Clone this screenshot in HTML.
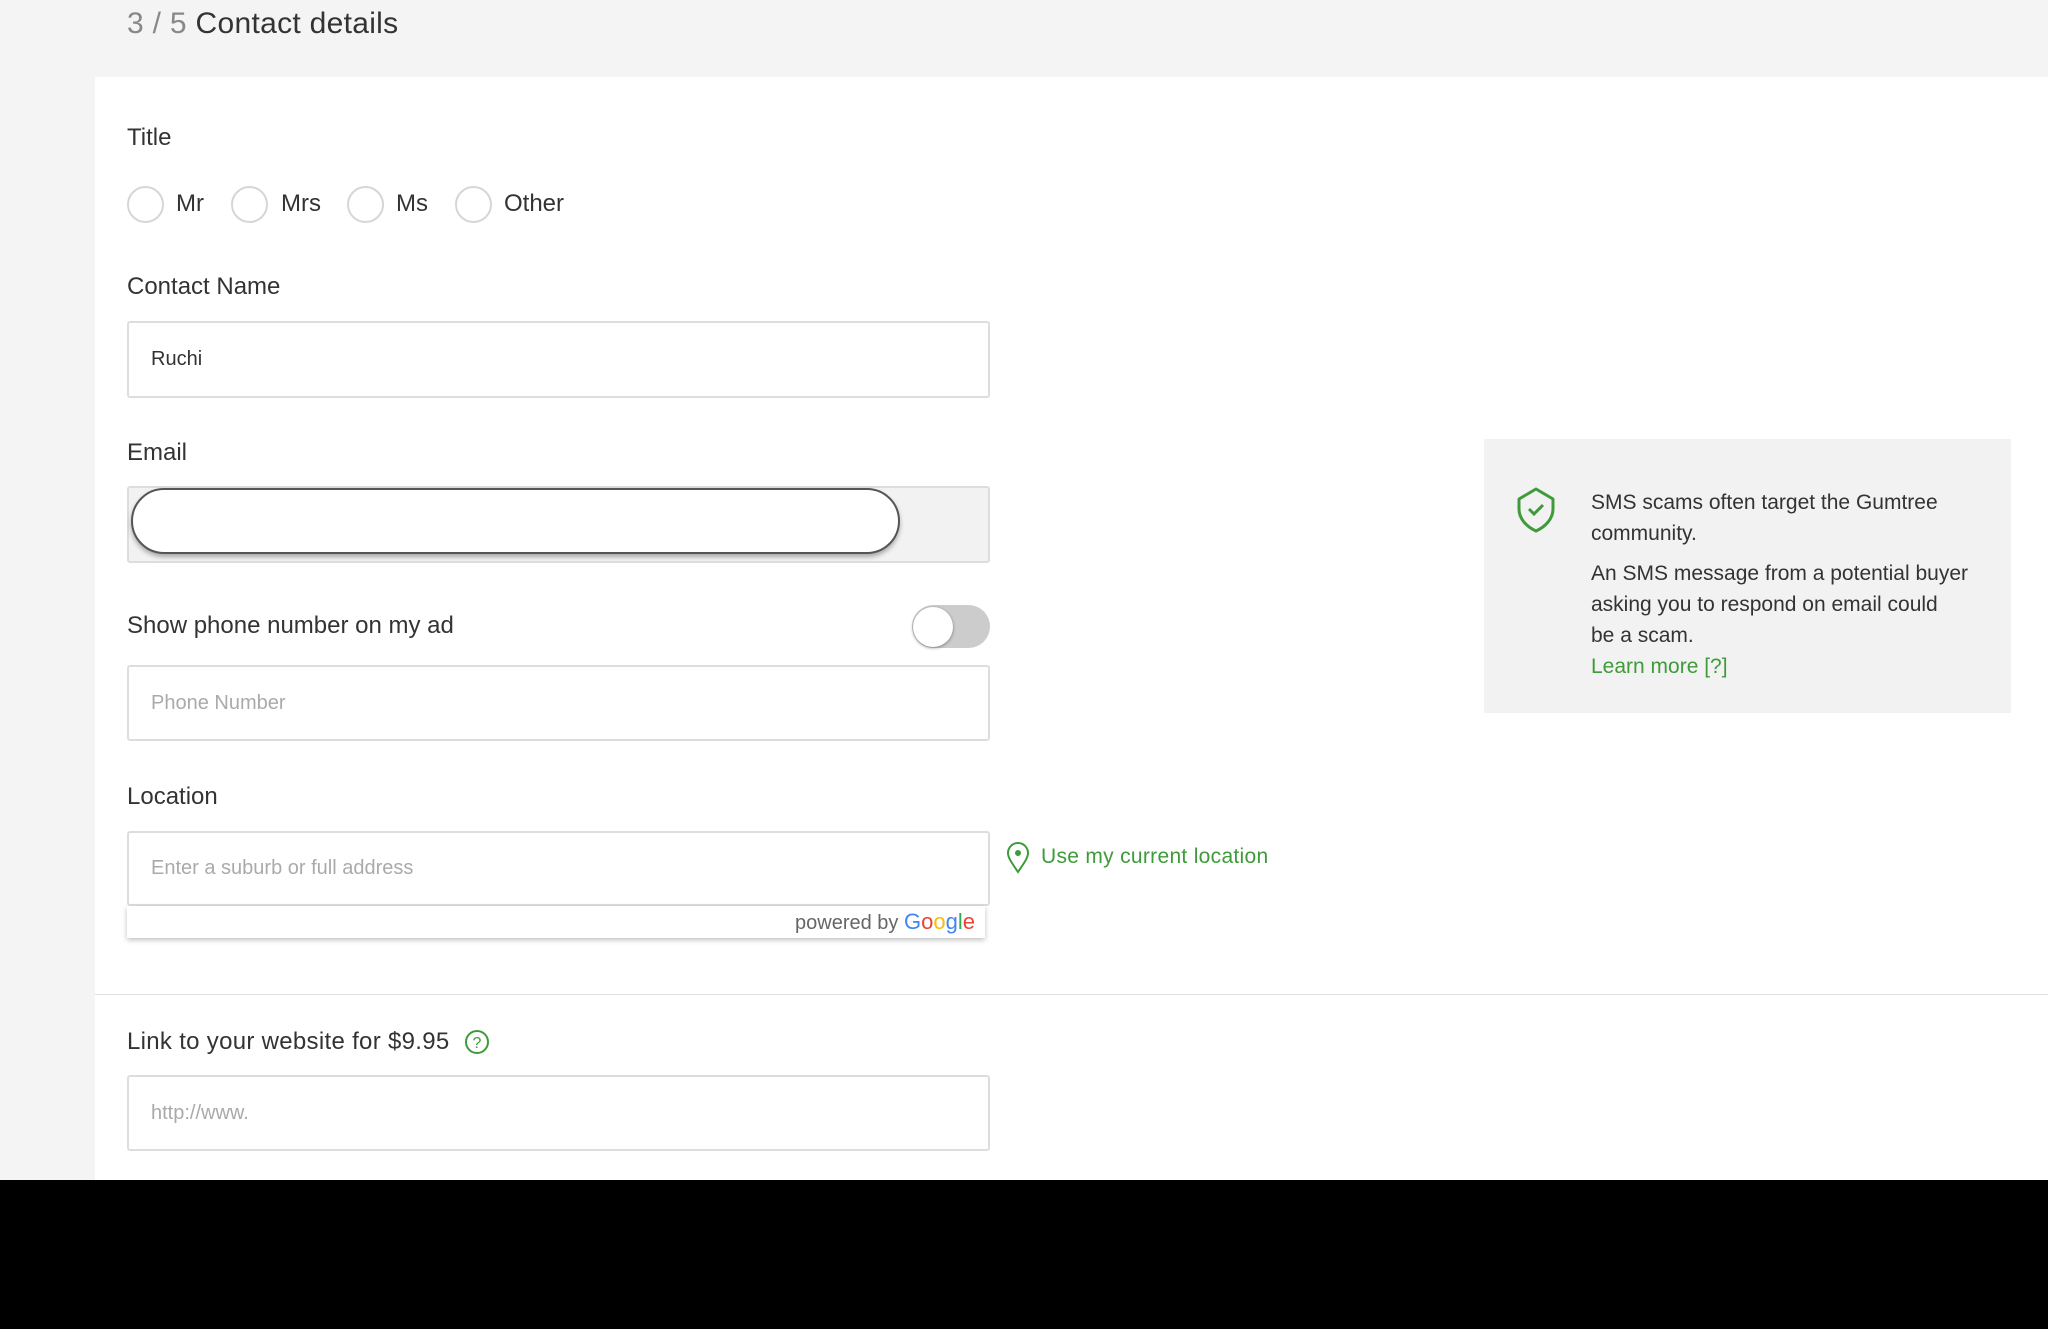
<!DOCTYPE html>
<html><head><meta charset="utf-8"><style>
*{box-sizing:border-box;margin:0;padding:0}
body{width:2048px;height:1329px;background:#000;font-family:"Liberation Sans",sans-serif;color:#333;position:relative;overflow:hidden}
.top{position:absolute;left:0;top:0;width:2048px;height:1180px;background:#f4f4f4}
.panel{position:absolute;left:95px;top:77px;width:1953px;height:1103px;background:#fff}
.a{position:absolute;white-space:nowrap}
.lbl{font-size:24px;color:#333}
.inp{position:absolute;left:127px;width:863px;border:2px solid #ddd;border-radius:3px;background:#fff;font-size:20px;color:#aaa;padding-left:22px;display:flex;align-items:center}
.radio{position:absolute;top:186px;width:37px;height:37px;border:2px solid #d6d6d6;border-radius:50%}
.rl{position:absolute;top:190px;font-size:24px;color:#333}
.g{color:#3f9b3a}
</style></head><body>
<div class="top"></div>
<div class="panel"></div>
<div class="a" style="left:127px;top:7px;font-size:30px;letter-spacing:.3px"><span style="color:#888">3 / 5</span> Contact details</div>
<div class="a lbl" style="left:127px;top:124px">Title</div>
<div class="radio" style="left:127px"></div><div class="rl" style="left:176px">Mr</div>
<div class="radio" style="left:231px"></div><div class="rl" style="left:281px">Mrs</div>
<div class="radio" style="left:347px"></div><div class="rl" style="left:396px">Ms</div>
<div class="radio" style="left:455px"></div><div class="rl" style="left:504px">Other</div>
<div class="a lbl" style="left:127px;top:273px">Contact Name</div>
<div class="inp" style="top:321px;height:77px;color:#333">Ruchi</div>
<div class="a lbl" style="left:127px;top:439px">Email</div>
<div class="inp" style="top:486px;height:77px;background:#f2f2f2"></div>
<div class="a" style="left:131px;top:488px;width:769px;height:66px;background:#fff;border:2px solid #555;border-radius:33px;box-shadow:0 3px 5px rgba(0,0,0,.3)"></div>
<div class="a lbl" style="left:127px;top:612px">Show phone number on my ad</div>
<div class="a" style="left:912px;top:605px;width:78px;height:43px;background:#ccc;border-radius:22px"></div>
<div class="a" style="left:913px;top:607px;width:40px;height:40px;background:#fff;border-radius:50%;box-shadow:0 1px 3px rgba(0,0,0,.4)"></div>
<div class="inp" style="top:665px;height:76px">Phone Number</div>
<div class="a lbl" style="left:127px;top:783px">Location</div>
<div class="inp" style="top:831px;height:75px">Enter a suburb or full address</div>
<div class="a" style="left:127px;top:906px;width:858px;height:32px;background:#fff;box-shadow:0 2px 5px rgba(0,0,0,.25)"></div>
<div class="a" style="left:795px;top:909px;font-size:20px;color:#666">powered by <span style="font-size:22px"><span style="color:#4285f4">G</span><span style="color:#ea4335">o</span><span style="color:#fbbc05">o</span><span style="color:#4285f4">g</span><span style="color:#34a853">l</span><span style="color:#ea4335">e</span></span></div>
<svg class="a" style="left:1006px;top:842px" width="24" height="32" viewBox="0 0 24 32"><path d="M12 30C6 21 2 16 2 11a10 10 0 0 1 20 0c0 5-4 10-10 19z" fill="none" stroke="#3f9b3a" stroke-width="2"/><circle cx="12" cy="11" r="3" fill="#3f9b3a"/></svg>
<div class="a g" style="left:1041px;top:845px;font-size:21px;letter-spacing:.3px">Use my current location</div>
<div class="a" style="left:95px;top:994px;width:1953px;height:1px;background:#e2e2e2"></div>
<div class="a lbl" style="left:127px;top:1028px;letter-spacing:.3px">Link to your website for $9.95</div>
<svg class="a" style="left:464px;top:1029px" width="26" height="26" viewBox="0 0 26 26"><circle cx="13" cy="13" r="11" fill="none" stroke="#3f9b3a" stroke-width="2"/><text x="13" y="19" font-size="16" text-anchor="middle" fill="#3f9b3a" font-family="Liberation Sans">?</text></svg>
<div class="inp" style="top:1075px;height:76px">http://www.</div>
<div class="a" style="left:1484px;top:439px;width:527px;height:274px;background:#f2f2f2"></div>
<svg class="a" style="left:1516px;top:487px" width="40" height="46" viewBox="0 0 40 46"><path d="M20 2L37 12V22C37 32 29 40 20 44C11 40 3 32 3 22V12Z" fill="none" stroke="#3f9b3a" stroke-width="3" stroke-linejoin="round"/><path d="M13 22l5 5 9-9" fill="none" stroke="#3f9b3a" stroke-width="3"/></svg>
<div class="a" style="left:1591px;top:487px;font-size:21px;line-height:31px;color:#333;white-space:normal;width:382px">SMS scams often target the Gumtree community.<div style="margin-top:9px">An SMS message from a potential buyer asking you to respond on email could<br>be a scam.</div><div class="g">Learn more [?]</div></div>
</body></html>
